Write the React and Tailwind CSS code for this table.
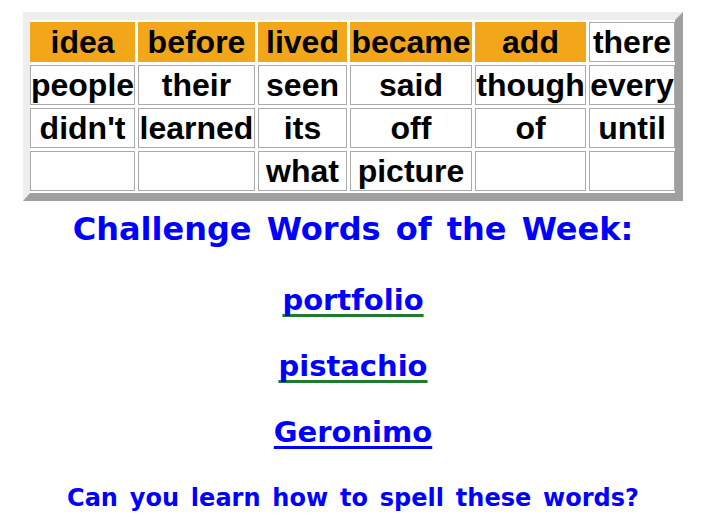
import React from "react";

const rows = [
   ["idea", "before", "lived", "became", "add", "there"],
   ["people", "their", "seen", "said", "though", "every"],
   ["didn't", "learned", "its", "off", "of", "until"],
   ["", "", "what", "picture", "", ""],
];

// first row, these ones are highlighted
const highlighted = ["idea", "before", "lived", "became", "add"];

const challenge = [
   { word: "portfolio", line: "decoration-[#207a30]", mt: "mt-[31px]" },
   { word: "pistachio", line: "decoration-[#207a30]", mt: "mt-[26px]" },
   { word: "Geronimo", line: "decoration-[#0000ff]", mt: "mt-[26px]" },
];

const App = () => {
   return (
      <div className="w-[702px] h-[528px] bg-white overflow-hidden">
         <div className="ml-[23px] w-[660px] flex flex-col">
            {/* Word wall */}
            <div className="mt-[12px] bg-white border-t-[8px] border-l-[7px] border-r-[8px] border-b-[8px] border-t-[#eeeeee] border-l-[#eeeeee] border-r-[#a0a0a0] border-b-[#a0a0a0] py-[2px]">
               <div className="grid grid-cols-[105px_117px_89px_122px_111px_86px] auto-rows-[40px] gap-[3px]">
                  {rows.flat().map((word, i) => {
                     const isHot = i < 6 && highlighted.includes(word);
                     return (
                        <div
                           key={i}
                           className={`flex items-center justify-center whitespace-nowrap border text-[32px] font-bold text-black font-['Liberation_Sans',Arial,sans-serif] ${
                              isHot
                                 ? "bg-[#f2a71b] border-[#f2a71b]"
                                 : "bg-white border-[#aaaaaa]"
                           }`}
                        >
                           {word}
                        </div>
                     );
                  })}
               </div>
            </div>

            {/* Challenge words */}
            <h2 className="mt-[8px] text-center text-[32px] leading-[40px] font-bold text-[#0000ff] [word-spacing:4px] font-['DejaVu_Sans',sans-serif]">
               Challenge Words of the Week:
            </h2>

            {challenge.map((c) => (
               <div
                  key={c.word}
                  className={`${c.mt} text-center text-[29px] leading-[40px] font-bold font-['DejaVu_Sans',sans-serif]`}
               >
                  <a
                     href="#"
                     className={`text-[#0000ff] underline decoration-[3px] underline-offset-[4px] [text-decoration-skip-ink:none] ${c.line}`}
                  >
                     {c.word}
                  </a>
               </div>
            ))}

            <p className="mt-[30px] text-center text-[24px] leading-[32px] font-bold text-[#0000ff] [word-spacing:3.5px] font-['DejaVu_Sans',sans-serif]">
               Can you learn how to spell these words?
            </p>
         </div>
      </div>
   );
};

export default App;
